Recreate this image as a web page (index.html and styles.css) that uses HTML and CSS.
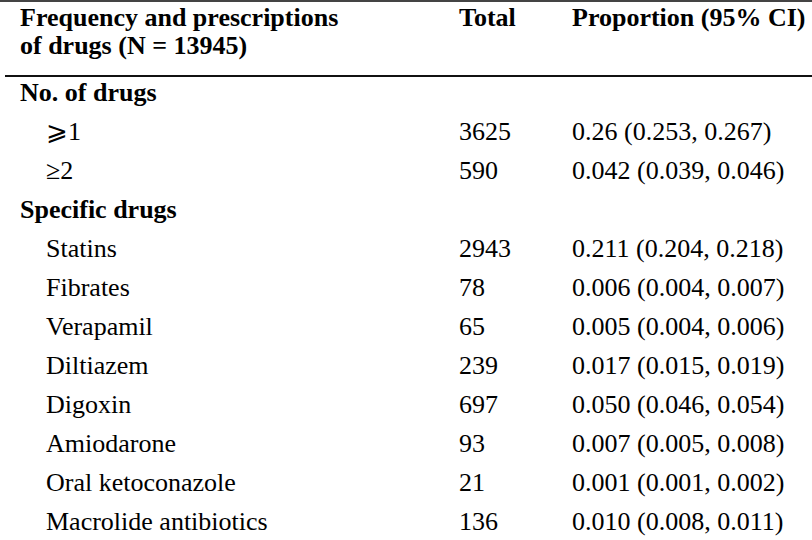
FILE: index.html
```html
<!DOCTYPE html>
<html lang="en">
<head>
<meta charset="utf-8">
<title>Frequency and prescriptions of drugs</title>
<link rel="stylesheet" href="styles.css">
</head>
<body>
<div class="top-rule"></div>
<table class="drugs">
  <colgroup>
    <col class="c-label">
    <col class="c-total">
    <col class="c-prop">
  </colgroup>
  <thead>
    <tr>
      <th class="label">Frequency and prescriptions<br>of drugs (N = 13945)</th>
      <th>Total</th>
      <th>Proportion (95% CI)</th>
    </tr>
  </thead>
  <tbody>
    <tr class="section first"><td class="label">No. of drugs</td><td></td><td></td></tr>
    <tr><td class="item">&#x2A7E;1</td><td>3625</td><td>0.26 (0.253, 0.267)</td></tr>
    <tr><td class="item">&#x2265;2</td><td>590</td><td>0.042 (0.039, 0.046)</td></tr>
    <tr class="section"><td class="label">Specific drugs</td><td></td><td></td></tr>
    <tr><td class="item">Statins</td><td>2943</td><td>0.211 (0.204, 0.218)</td></tr>
    <tr><td class="item">Fibrates</td><td>78</td><td>0.006 (0.004, 0.007)</td></tr>
    <tr><td class="item">Verapamil</td><td>65</td><td>0.005 (0.004, 0.006)</td></tr>
    <tr><td class="item">Diltiazem</td><td>239</td><td>0.017 (0.015, 0.019)</td></tr>
    <tr><td class="item">Digoxin</td><td>697</td><td>0.050 (0.046, 0.054)</td></tr>
    <tr><td class="item">Amiodarone</td><td>93</td><td>0.007 (0.005, 0.008)</td></tr>
    <tr><td class="item">Oral ketoconazole</td><td>21</td><td>0.001 (0.001, 0.002)</td></tr>
    <tr><td class="item">Macrolide antibiotics</td><td>136</td><td>0.010 (0.008, 0.011)</td></tr>
  </tbody>
</table>
</body>
</html>
```
FILE: styles.css
```css
html, body {
  margin: 0;
  padding: 0;
  background: #fff;
}
body {
  font-family: "Liberation Serif", "Times New Roman", "DejaVu Serif", serif;
  font-size: 26px;
  color: #000;
}
.top-rule {
  height: 2px;
  background: #444;
}
.drugs {
  margin-left: 5px;
  width: 807px;
  border-collapse: collapse;
  table-layout: fixed;
}
.c-label { width: 454px; }
.c-total { width: 113px; }
.c-prop { width: 240px; }
.drugs th,
.drugs td {
  padding: 0;
  text-align: left;
  vertical-align: top;
  white-space: nowrap;
}
.drugs th {
  font-weight: bold;
  line-height: 28px;
  padding-top: 2px;
  padding-bottom: 15px;
  border-bottom: 2px solid #111;
}
.drugs td {
  line-height: 30px;
  padding-top: 1px;
  padding-bottom: 8px;
}
.drugs .label {
  padding-left: 15px;
}
.drugs .section .label {
  font-weight: bold;
}
.drugs .item {
  padding-left: 41px;
}
```
